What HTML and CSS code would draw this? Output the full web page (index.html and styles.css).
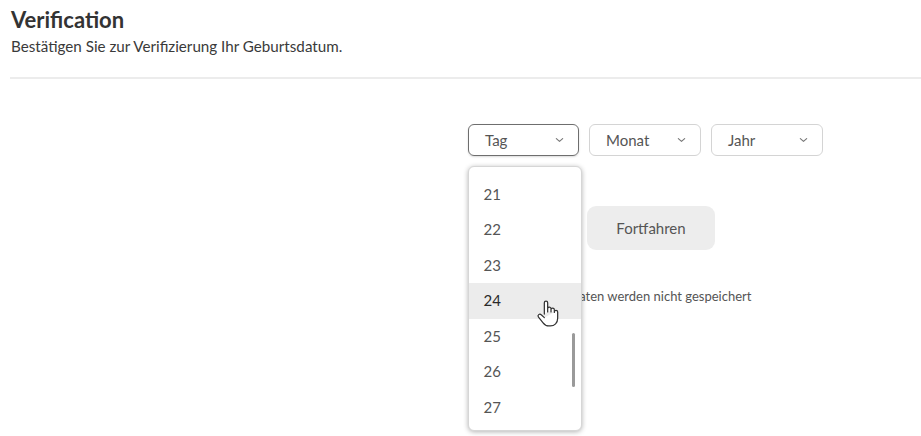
FILE: index.html
```html
<!DOCTYPE html>
<html lang="de">
<head>
<meta charset="utf-8">
<title>Verification</title>
<link rel="stylesheet" href="styles.css">
</head>
<body>
  <header class="page-head">
    <h1 class="title">Verification</h1>
    <p class="subtitle">Bestätigen Sie zur Verifizierung Ihr Geburtsdatum.</p>
  </header>
  <hr class="divider">
  <main class="verify">
    <div class="form">
      <div class="selects">
        <div class="select select-open">
          <span>Tag</span>
          <svg class="chev" viewBox="0 0 10 6" width="9" height="6"><path d="M1.5 1.5 L5 4.5 L8.5 1.5" fill="none" stroke="#777" stroke-width="1.3" stroke-linecap="round" stroke-linejoin="round"/></svg>
          <div class="menu">
            <ul class="options">
              <li>21</li>
              <li>22</li>
              <li>23</li>
              <li class="hover">24</li>
              <li>25</li>
              <li>26</li>
              <li>27</li>
            </ul>
            <span class="scrollbar"></span>
            <svg class="pointer" viewBox="0 0 24 28" width="25" height="30">
              <path d="M8 14 V3.2 a1.6 1.6 0 0 1 3.2 0 V12 M11.2 11 V9 a1.6 1.6 0 0 1 3.2 0 V12 M14.4 11.4 V10 a1.6 1.6 0 0 1 3.2 0 V12.5 M17.6 12 a1.6 1.6 0 0 1 3.2 0 V18 c0 4.5 -3 7.5 -7 7.5 h-1.5 c-2.5 0 -4 -1 -5.5 -3 L2.4 17 a1.7 1.7 0 0 1 2.6 -2.2 L8 17.5" fill="#fff" stroke="#333" stroke-width="1.2" stroke-linejoin="round" stroke-linecap="round"/>
            </svg>
          </div>
        </div>
        <div class="select">
          <span>Monat</span>
          <svg class="chev" viewBox="0 0 10 6" width="9" height="6"><path d="M1.5 1.5 L5 4.5 L8.5 1.5" fill="none" stroke="#777" stroke-width="1.3" stroke-linecap="round" stroke-linejoin="round"/></svg>
        </div>
        <div class="select">
          <span>Jahr</span>
          <svg class="chev" viewBox="0 0 10 6" width="9" height="6"><path d="M1.5 1.5 L5 4.5 L8.5 1.5" fill="none" stroke="#777" stroke-width="1.3" stroke-linecap="round" stroke-linejoin="round"/></svg>
        </div>
      </div>
      <button class="continue" type="button">Fortfahren</button>
      <p class="note">Ihre Daten werden nicht gespeichert</p>
    </div>
  </main>
</body>
</html>
```

FILE: styles.css
```css
* { box-sizing: border-box; }

html, body {
  margin: 0;
  background: #fff;
  font-family: Lato, "Open Sans", sans-serif;
  color: #333;
}

body {
  min-height: 436px;
}

.page-head {
  padding: 6px 11px 0;
}

.title {
  margin: 0;
  font-size: 22px;
  font-weight: 700;
  line-height: 28px;
  color: #333;
}

.subtitle {
  margin: 3px 0 0;
  font-size: 15.2px;
  line-height: 18px;
  color: #3a3a3a;
}

.divider {
  margin: 22px 0 0 10px;
  border: 0;
  height: 2px;
  background: #ececec;
}

.verify {
  padding: 45px 0 0 468px;
}

.form {
  width: 356px;
  display: flex;
  flex-direction: column;
}

.selects {
  display: flex;
  gap: 10px;
}

.select {
  position: relative;
  width: 112px;
  height: 32px;
  border: 1.5px solid #d4d4d4;
  border-radius: 6px;
  display: flex;
  align-items: center;
  justify-content: space-between;
  padding: 0 14px 0 16px;
  font-size: 15px;
  color: #555;
}

.select-open {
  width: 111px;
  border-color: #6e6e6e;
  box-shadow: 0 1px 2px rgba(0,0,0,0.15);
}

.chev { display: block; }

.menu {
  position: absolute;
  left: -1.5px;
  top: 40.5px;
  width: 114px;
  height: 265px;
  background: #fff;
  border: 1px solid #d6d6d6;
  border-radius: 6px;
  box-shadow: 0 1px 5px rgba(0,0,0,0.3);
  overflow: hidden;
  z-index: 2;
}

.options {
  margin: 0;
  padding: 10px 0 0;
  list-style: none;
}

.options li {
  height: 35.5px;
  line-height: 35.5px;
  padding-left: 15px;
  font-size: 15px;
  color: #555;
}

.options li.hover {
  background: #ececec;
  color: #2a2a2a;
}

.scrollbar {
  position: absolute;
  right: 6px;
  top: 166px;
  width: 3px;
  height: 54px;
  border-radius: 2px;
  background: #9a9a9a;
}

.pointer {
  position: absolute;
  left: 67px;
  top: 132px;
}

.continue {
  align-self: flex-start;
  margin: 50px 0 0 119px;
  width: 128px;
  height: 44px;
  border: 0;
  border-radius: 9px;
  background: #ededed;
  font-family: Lato, "Open Sans", sans-serif;
  font-size: 15px;
  color: #555;
}

.note {
  margin: 38px 0 0 76px;
  font-size: 13px;
  color: #555;
}
```
